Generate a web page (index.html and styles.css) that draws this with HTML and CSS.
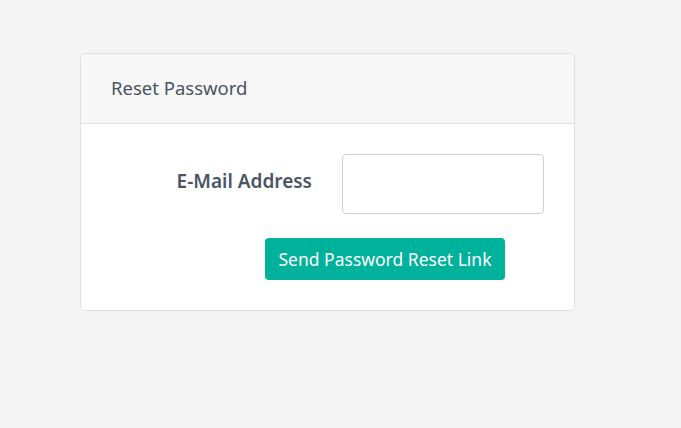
FILE: index.html
```html
<!DOCTYPE html>
<html lang="en">
<head>
<meta charset="utf-8">
<title>Reset Password</title>
<link rel="stylesheet" href="styles.css">
</head>
<body>
<div class="card">
  <div class="card-header">Reset Password</div>
  <div class="card-body">
    <form class="form">
      <div class="row">
        <label class="label" for="email">E-Mail Address</label>
        <input class="input" id="email" type="email">
      </div>
      <div class="actions">
        <button class="btn" type="button">Send Password Reset Link</button>
      </div>
    </form>
  </div>
</div>
</body>
</html>
```
FILE: styles.css
```css
html, body {
  margin: 0;
  padding: 0;
  background: #f4f4f4;
  font-family: "Noto Sans", "Open Sans", sans-serif;
  color: #4a5464;
}
body {
  padding: 53px 0 0 80px;
}
.card {
  width: 493px;
  height: 256px;
  background: #fff;
  border: 1px solid #dfdfdf;
  border-radius: 5px;
  overflow: hidden;
}
.card-header {
  height: 70px;
  box-sizing: border-box;
  background: #f7f7f7;
  border-bottom: 1px solid #dfdfdf;
  padding-left: 30px;
  display: flex;
  align-items: center;
  font-size: 18.5px;
  line-height: 1;
}
.card-body {
  padding: 30px 30px 0 30px;
}
.row {
  display: flex;
  align-items: center;
  gap: 30px;
}
.label {
  width: 201px;
  text-align: right;
  font-weight: 600;
  font-size: 19px;
  margin-bottom: 6px;
}
.input {
  width: 202px;
  height: 60px;
  box-sizing: border-box;
  border: 1px solid #cfcfcf;
  border-radius: 4px;
  margin: 0;
  font: inherit;
}
.actions {
  margin-top: 24px;
  padding-left: 154px;
}
.btn {
  width: 240px;
  height: 42px;
  border: none;
  border-radius: 4px;
  background: #00b19c;
  color: #fff;
  font-family: inherit;
  font-size: 17.5px;
  padding: 0;
  cursor: pointer;
}
```
